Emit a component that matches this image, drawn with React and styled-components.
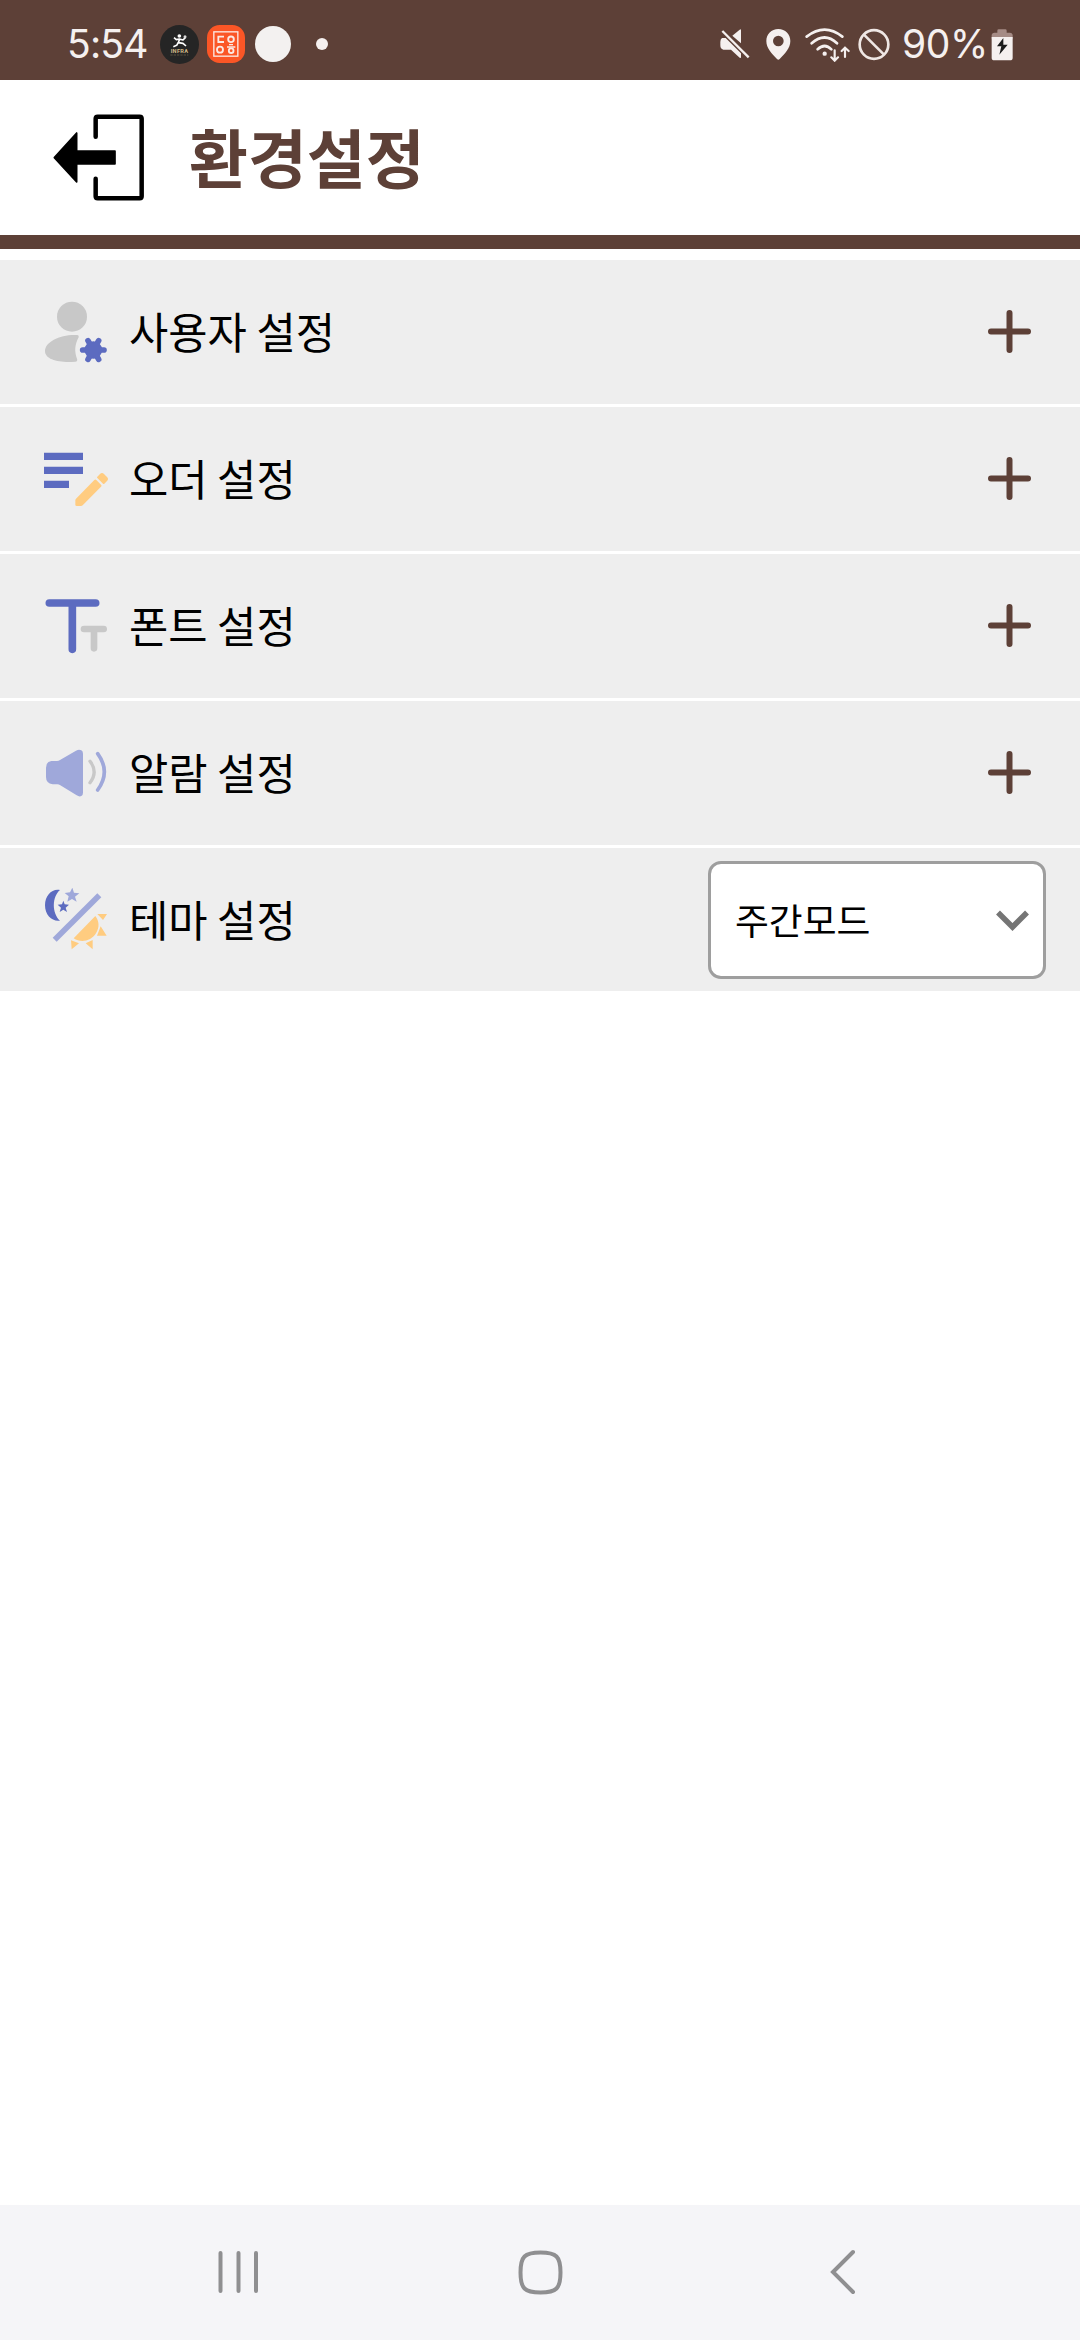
import React from 'react';
import styled, { createGlobalStyle } from 'styled-components';

const colors = {
    brown: '#5d4037',
    row: '#eeeeee',
    white: '#ffffff',
    status: '#f5f0ef',
    indigo: '#5c6bc0',
    lavender: '#9fa8da',
    orange: '#ffcc80',
    grey: '#c8c8c8',
    nav: '#f5f5f8',
    navIcon: '#8f8f91',
};

const GlobalStyle = createGlobalStyle`
    body {
        margin: 0;
        background: ${colors.white};
        font-family: 'Noto Sans CJK KR', sans-serif;
    }
`;

const Screen = styled.div`
    width: 1080px;
    height: 2340px;
    display: flex;
    flex-direction: column;
    overflow: hidden;
`;

const StatusBar = styled.div`
    height: 80px;
    box-sizing: border-box;
    padding: 8px 67px 0;
    display: flex;
    align-items: center;
    justify-content: space-between;
    background: ${colors.brown};
    color: ${colors.status};
`;

const StatusGroup = styled.div`
    display: flex;
    align-items: center;
`;

const StatusText = styled.span`
    width: ${props => props.width}px;
    font-family: Inter, sans-serif;
    font-size: 39px;
    line-height: 40px;
    letter-spacing: ${props => props.spacing}px;
    white-space: nowrap;
`;

const BatteryText = styled(StatusText)`
    margin-left: 12px;
`;

const Icon = styled.svg`
    display: block;
    flex: none;
    width: ${props => props.$w}px;
    height: ${props => props.$h}px;
    margin-left: ${props => props.$left || 0}px;
`;

const Header = styled.header`
    height: 169px;
    box-sizing: border-box;
    padding-left: 53px;
    display: flex;
    align-items: center;
    border-bottom: 14px solid ${colors.brown};
`;

const Title = styled.h1`
    margin: 0 0 6px 44px;
    font-size: 64px;
    font-weight: 700;
    line-height: 80px;
    color: ${colors.brown};
`;

const List = styled.main`
    flex-grow: 1;
    padding-top: 11px;
`;

const Row = styled.div`
    height: 147px;
    box-sizing: border-box;
    padding: 0 49px 0 44px;
    display: flex;
    align-items: center;
    background: ${colors.row};
    border-bottom: 3px solid ${colors.white};

    &:last-child {
        height: 143px;
        padding-right: 34px;
        border-bottom: 0;
    }
`;

const Label = styled.span`
    flex-grow: 1;
    margin: 0 0 4px 21px;
    font-size: 42.7px;
    line-height: 60px;
    color: #000;
`;

const Plus = styled(Icon)`
    margin-bottom: 1px;
`;

const Select = styled.div`
    width: 338px;
    height: 118px;
    box-sizing: border-box;
    margin-top: 1px;
    padding: 0 14px 0 24px;
    display: flex;
    align-items: center;
    justify-content: space-between;
    border: 3px solid #9e9e9e;
    border-radius: 13px;
    background: ${colors.white};
`;

const SelectValue = styled.span`
    margin-bottom: 3px;
    font-size: 36.8px;
    line-height: 52px;
    color: #000;
`;

const NavBar = styled.nav`
    height: 135px;
    flex: none;
    box-sizing: border-box;
    padding: 0 224px 1px 218px;
    display: flex;
    align-items: center;
    justify-content: space-between;
    background: ${colors.nav};
`;

const InfraIcon = () => <Icon $w={39} $h={39} $left={13} viewBox="360 74 117 117">
        <circle cx="418.500" cy="132.500" r="58.500" fill="#252525" />
        <circle cx="418" cy="107" r="5.500" fill="#fff" />
        <path
            d="M402 112l7 6 9-2 11 3 7-7M419 116l-4 11 14 2 9 8M415 126l-5 9-10 4"
            fill="none"
            stroke="#fff"
            strokeWidth="5"
            strokeLinejoin="round"
        />
        <circle cx="435" cy="109" r="4.500" fill="#ddd" />
        <text
            x="418"
            y="159"
            textAnchor="middle"
            fontFamily="Roboto, sans-serif"
            fontSize="17"
            fontWeight="700"
            textLength="52"
            fill="#cfb986"
        >
            INFRA
        </text>
        <path d="M391 164h54" stroke="#75694e" strokeWidth="2" strokeDasharray="7 3" />
    </Icon>

const OrangeIcon = () => <Icon $w={38} $h={38} $left={8} viewBox="503 75 114 114">
        <rect x="503" y="75" width="114" height="114" rx="38" fill="#fb5626" />
        <g fill="none" stroke="#fbe9e3" strokeWidth="5.500">
            <rect x="523.500" y="95.500" width="72" height="73" strokeWidth="4" />
            <path d="M554 110h-17v16h17" />
            <circle cx="575" cy="118" r="8.500" />
            <circle cx="542" cy="149" r="9" />
            <path d="M569 134h12M563 141h25" strokeWidth="4" />
            <circle cx="575.500" cy="152" r="7" />
        </g>
    </Icon>

const ExitIcon = () => <Icon $w={92} $h={87} viewBox="70 70 276 261">
        <path
            d="M198 138V84q0-6 6-6h126q6 0 6 6v233q0 6-6 6H204q-6 0-6-6v-53"
            fill="none"
            stroke="#000"
            strokeWidth="13.500"
            strokeLinecap="round"
        />
        <path
            d="M74 201l67-74v54h115v39H141v54z"
            stroke="#000"
            strokeWidth="5"
            strokeLinejoin="round"
        />
    </Icon>

const UserIcon = () => <Icon $w={64} $h={64} viewBox="42 60 192 192">
        <circle cx="126" cy="110" r="45" fill={colors.grey} />
        <path
            d="M142 165q6 1 4 7c-12 22-13 43-5 64q3 8-5 9C90 249 45 240 45 213c0-28 47-51 97-48z"
            fill={colors.grey}
        />
        <g fill={colors.indigo} stroke={colors.indigo} strokeWidth="17" strokeLinecap="round">
            <circle cx="190" cy="210" r="18" />
            <path d="M158 210h64M174 182l32 56M206 182l-32 56" />
        </g>
    </Icon>

const OrderIcon = () => <Icon $w={64} $h={64} viewBox="42 81 192 192">
        <path
            d="M42 98h117v22H42zM42 140h117v22H42zM42 182h75v22H42z"
            fill={colors.indigo}
        />
        <path
            d="M193 180q3-3 6 0l14 14q3 3 0 6l-55 56q-2 2-5 2h-13q-4 0-4-4v-13q0-3 2-5zM202 170l8-8q6-6 12 0l9 9q6 6 0 12l-8 8q-2 2-4 0l-17-17q-2-2 0-4z"
            fill={colors.orange}
        />
    </Icon>

const FontIcon = () => <Icon $w={64} $h={64} viewBox="42 102 192 192">
        <g fill="none" strokeLinecap="round">
            <path d="M162 207h59M192 207v58" stroke={colors.grey} strokeWidth="20" />
            <path d="M58 129h139M127 129v139" stroke={colors.indigo} strokeWidth="23" />
        </g>
    </Icon>

const AlarmIcon = () => <Icon $w={64} $h={64} viewBox="42 93 192 192">
        <path
            d="M64 153h17q5 0 9-3l48-28q9-5 16-1 5 3 5 10v117q0 7-5 10-6 3-14-2l-49-30q-4-3-9-3H68q-20-3-20-22v-28q0-18 16-20z"
            fill={colors.lavender}
        />
        <g fill="none" strokeLinecap="round">
            <path d="M180 154q25 32 0 64" stroke={colors.grey} strokeWidth="10" />
            <path d="M203 131q40 54 0 109" stroke={colors.lavender} strokeWidth="11" />
        </g>
    </Icon>

const ThemeIcon = () => <Icon $w={64} $h={64} viewBox="42 114 192 192">
        <path
            d="M90 120c-24 20-25 69 0 92-23 4-45-16-45-46s21-51 45-46z"
            fill={colors.indigo}
        />
        <path
            d="M100 152l4 11 13 1-10 9 4 13-11-7-11 7 4-13-10-9 13-1z"
            fill={colors.indigo}
        />
        <path
            d="M127 113l5 15 16 2-13 10 5 15-14-8-14 8 4-16-12-10 16-2z"
            fill={colors.lavender}
        />
        <path d="M74 269L208 136" stroke={colors.lavender} strokeWidth="17" />
        <path
            d="M131 265c22 15 53 8 67-15 11-18 10-36-2-52zM202 192h29l-12 18zM212 229l18 28h-29zM123 271l24 9-22 18zM188 270v28l-21-18z"
            fill={colors.orange}
        />
    </Icon>

const PlusIcon = () => <Plus $w={43} $h={43} viewBox="0 0 43 43">
        <path
            d="M3 21.500h37M21.500 3v37"
            stroke={colors.brown}
            strokeWidth="6"
            strokeLinecap="round"
        />
    </Plus>

const MuteIcon = () => <Icon $w={30} $h={30} viewBox="60 88 90 90">
        <path
            d="M97 108l22-18q4-3 4 2v39zM66 115h11l46 46v11q0 5-4 2l-26-24H70q-9-2-9-13v-10q0-9 5-12z"
            fill={colors.status}
        />
        <path d="M67 94l79 79" stroke={colors.status} strokeWidth="7" />
    </Icon>

const LocationIcon = () => <Icon $w={25} $h={31} $left={16} viewBox="197 86 75 93">
        <path
            fillRule="evenodd"
            d="M234 86c21 0 36 16 36 36 0 22-17 38-32 54q-4 4-8 0c-15-16-32-32-32-54 0-20 15-36 36-36zm0 20a16 16 0 100 32 16 16 0 000-32z"
            fill={colors.status}
        />
    </Icon>

const WifiIcon = () => <Icon $w={46} $h={35} $left={14} viewBox="316 77 138 105">
        <g fill="none" stroke={colors.status} strokeWidth="8" strokeLinecap="round">
            <path d="M321 106q54-42 107 0M336 126q39-35 76 0M354 144q21-20 41 0" />
            <path
                d="M405 147v30M395 168l10 10 10-10M436 167v-28M426 149l10-10 11 10"
                strokeWidth="6.500"
            />
        </g>
        <circle cx="375" cy="157" r="6.500" fill={colors.status} />
    </Icon>

const BlockedIcon = () => <Icon $w={32} $h={33} $left={7} viewBox="473 78 96 99">
        <g fill="none" stroke="#efe7e4" strokeWidth="8">
            <circle cx="521" cy="127.500" r="43" />
            <path d="M490 97l61 61" />
        </g>
    </Icon>

const BatteryIcon = () => <Icon $w={22} $h={33} $left={5} viewBox="874 83 66 99">
        <path
            d="M876 103q2-6 8-6h9v-6q0-4 4-4h20q4 0 4 4v6h10q6 0 8 6v12h-63z"
            fill="#a58b85"
        />
        <path d="M876 110h63v62q0 8-8 8h-47q-8 0-8-8z" fill={colors.status} />
        <path d="M911 113l-19 25h13l-6 25 25-30h-13z" fill="#1c1c1c" />
    </Icon>

const ITEMS = [
    { label: '사용자 설정', icon: <UserIcon /> },
    { label: '오더 설정', icon: <OrderIcon /> },
    { label: '폰트 설정', icon: <FontIcon /> },
    { label: '알람 설정', icon: <AlarmIcon /> },
];

const App = () => <Screen>
        <GlobalStyle />
        <StatusBar>
            <StatusGroup>
                <StatusText width={80} spacing={-0.8}>5:54</StatusText>
                <InfraIcon />
                <OrangeIcon />
                <Icon $w={36} $h={36} $left={10} viewBox="0 0 36 36">
                    <circle cx="18" cy="18" r="18" fill="#f3f1f0" />
                </Icon>
                <Icon $w={12} $h={12} $left={25} viewBox="0 0 12 12">
                    <circle cx="6" cy="6" r="6" fill={colors.status} />
                </Icon>
            </StatusGroup>
            <StatusGroup>
                <MuteIcon />
                <LocationIcon />
                <WifiIcon />
                <BlockedIcon />
                <BatteryText width={84} spacing={-0.4}>90%</BatteryText>
                <BatteryIcon />
            </StatusGroup>
        </StatusBar>
        <Header>
            <ExitIcon />
            <Title>환경설정</Title>
        </Header>
        <List>
            {ITEMS.map(({ label, icon }) => <Row key={label}>
                {icon}
                <Label>{label}</Label>
                <PlusIcon />
            </Row>)}
            <Row>
                <ThemeIcon />
                <Label>테마 설정</Label>
                <Select>
                    <SelectValue>주간모드</SelectValue>
                    <Icon $w={33} $h={21} viewBox="0 0 33 21">
                        <path
                            d="M2 2.500l14.500 14.500L31 2.500"
                            fill="none"
                            stroke="#757575"
                            strokeWidth="5.500"
                        />
                    </Icon>
                </Select>
            </Row>
        </List>
        <NavBar>
            <Icon $w={41} $h={44} viewBox="0 0 41 44">
                <path
                    d="M2.500 3v38M20.500 3v38M38 3v38"
                    stroke={colors.navIcon}
                    strokeWidth="4"
                    strokeLinecap="round"
                />
            </Icon>
            <Icon $w={45} $h={45} $left={-8} viewBox="0 0 45 45">
                <path
                    d="M22.500 2.500c16 0 20 4 20 20s-4 20-20 20-20-4-20-20 4-20 20-20z"
                    fill="none"
                    stroke={colors.navIcon}
                    strokeWidth="4"
                />
            </Icon>
            <Icon $w={27} $h={46} viewBox="0 0 27 46">
                <path
                    d="M24 3L4 23l20 20"
                    fill="none"
                    stroke={colors.navIcon}
                    strokeWidth="4"
                    strokeLinecap="round"
                />
            </Icon>
        </NavBar>
    </Screen>

export default App;
